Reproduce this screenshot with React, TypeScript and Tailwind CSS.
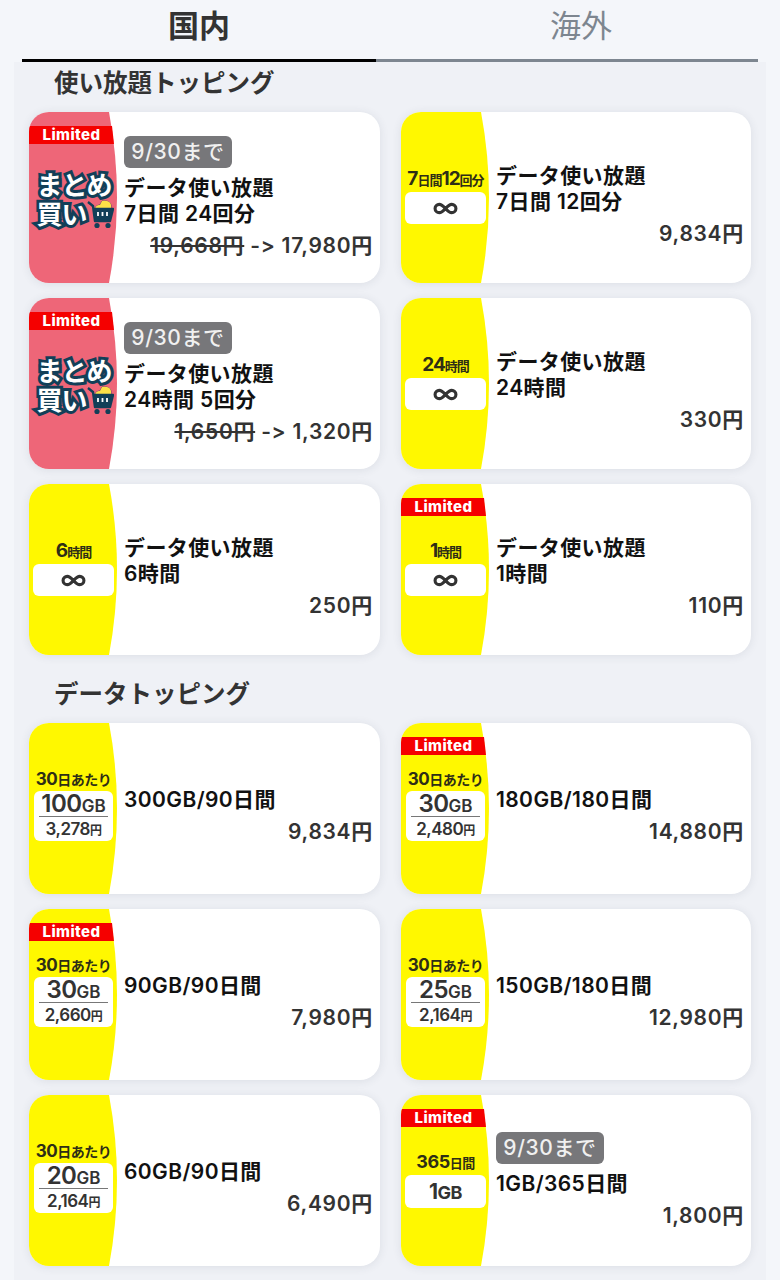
import { Infinity as InfinityIcon } from "lucide-react";

type Band =
    | { kind: "matome" }
    | { kind: "unlimited"; label: [string, string, string?, string?] }
    | { kind: "gb"; gb: string; price: string }
    | { kind: "year" };

type Topping = {
    band: Band;
    limited?: boolean;
    deadline?: boolean;
    title: string[];
    oldPrice?: string;
    price: string;
};

const unlimitedToppings: Topping[] = [
    { band: { kind: "matome" }, limited: true, deadline: true, title: ["データ使い放題", "7日間 24回分"], oldPrice: "19,668円", price: "17,980円" },
    { band: { kind: "unlimited", label: ["7", "日間", "12", "回分"] }, title: ["データ使い放題", "7日間 12回分"], price: "9,834円" },
    { band: { kind: "matome" }, limited: true, deadline: true, title: ["データ使い放題", "24時間 5回分"], oldPrice: "1,650円", price: "1,320円" },
    { band: { kind: "unlimited", label: ["24", "時間"] }, title: ["データ使い放題", "24時間"], price: "330円" },
    { band: { kind: "unlimited", label: ["6", "時間"] }, title: ["データ使い放題", "6時間"], price: "250円" },
    { band: { kind: "unlimited", label: ["1", "時間"] }, limited: true, title: ["データ使い放題", "1時間"], price: "110円" },
];

const dataToppings: Topping[] = [
    { band: { kind: "gb", gb: "100", price: "3,278" }, title: ["300GB/90日間"], price: "9,834円" },
    { band: { kind: "gb", gb: "30", price: "2,480" }, limited: true, title: ["180GB/180日間"], price: "14,880円" },
    { band: { kind: "gb", gb: "30", price: "2,660" }, limited: true, title: ["90GB/90日間"], price: "7,980円" },
    { band: { kind: "gb", gb: "25", price: "2,164" }, title: ["150GB/180日間"], price: "12,980円" },
    { band: { kind: "gb", gb: "20", price: "2,164" }, title: ["60GB/90日間"], price: "6,490円" },
    { band: { kind: "year" }, limited: true, deadline: true, title: ["1GB/365日間"], price: "1,800円" },
];

const BandShape = ({ color }: { color: string }) => (
    <svg className="absolute left-0 top-0" width="90" height="171" viewBox="0 0 90 171">
        <path d="M0 0H80Q96 85.5 80 171H0Z" fill={color} />
    </svg>
);

const CartIcon = () => (
    <svg width="27" height="30" viewBox="0 0 27 30" className="absolute left-[50px] top-[-1px]">
        <path d="M8 11q0-5 5-5l2-4q8-1 9 4v5z" fill="#fde047" stroke="#123f58" strokeWidth="0.6" />
        <path d="M1 3l5 4 2 15h15l3-12H7" fill="#123f58" stroke="#123f58" strokeWidth="2.4" strokeLinejoin="round" />
        <path d="M11 13v4M15.500 13v4M20 13v4" stroke="#ffffff" strokeWidth="1.800" />
        <circle cx="10" cy="26.500" r="2.600" fill="#123f58" />
        <circle cx="21" cy="26.500" r="2.600" fill="#123f58" />
    </svg>
);

const BandContent = ({ band }: { band: Band }) => {
    if (band.kind === "matome") {
        return (
            <div className="relative mt-[4px] flex w-[86px] flex-col pl-[6px] text-[26px] font-bold leading-[29px] tracking-[-1px] text-white [-webkit-text-stroke:6px_#123f58] [paint-order:stroke_fill]">
                <span>まとめ</span>
                <span className="relative">
                    買い
                    <CartIcon />
                </span>
            </div>
        );
    }

    if (band.kind === "unlimited") {
        const [a, b, c, d] = band.label;
        return (
            <div className="-mt-[5px] flex w-[81px] flex-col items-center">
                <div className="flex h-[26px] items-baseline font-bold leading-[26px] tracking-[-1px] text-[#2e2e16]">
                    <span className="text-[19px]">{a}</span>
                    <span className="text-[13px]">{b}</span>
                    {c && <span className="text-[19px]">{c}</span>}
                    {d && <span className="text-[13px]">{d}</span>}
                </div>
                <div className="flex h-[32px] w-full items-center justify-center rounded-md bg-white">
                    <InfinityIcon size={25} strokeWidth={3} color="#333333" />
                </div>
            </div>
        );
    }

    if (band.kind === "year") {
        return (
            <div className="-mt-[5px] flex w-[81px] flex-col items-center">
                <div className="flex h-[26px] items-baseline font-bold leading-[26px] tracking-[-0.5px] text-[#2e2e16]">
                    <span className="text-[18px]">365</span>
                    <span className="text-[13px]">日間</span>
                </div>
                <div className="flex h-[33px] w-full items-baseline justify-center rounded-md bg-white pt-[1px] font-bold tracking-[-0.5px] text-[#333333]">
                    <span className="text-[21px]">1</span>
                    <span className="text-[18px]">GB</span>
                </div>
            </div>
        );
    }

    return (
        <div className="-mt-[10px] flex w-[79px] flex-col items-center">
            <div className="flex h-[24px] items-baseline font-bold leading-[24px] tracking-[-0.5px] text-[#2e2e16]">
                <span className="text-[17px]">30</span>
                <span className="text-[14px]">日あたり</span>
            </div>
            <div className="flex h-[50px] w-full flex-col items-center rounded-md bg-white px-[5px] text-[#333333]">
                <div className="flex h-[26px] w-full items-baseline justify-center border-b border-[#777777] font-semibold">
                    <span className="text-[24px] leading-[26px] tracking-[-0.5px]">{band.gb}</span>
                    <span className="text-[17px] leading-[26px]">GB</span>
                </div>
                <div className="flex h-[24px] items-baseline font-semibold tracking-[-0.5px]">
                    <span className="text-[17px] leading-[24px]">{band.price}</span>
                    <span className="text-[12px] leading-[24px]">円</span>
                </div>
            </div>
        </div>
    );
};

const ToppingCard = ({ item }: { item: Topping }) => {
    const isMatome = item.band.kind === "matome";

    return (
        <div className="relative flex h-[171px] overflow-hidden rounded-[20px] bg-white shadow-[0_1px_10px_rgba(50,60,80,0.1)]">
            <BandShape color={isMatome ? "#ee6678" : "#fff800"} />
            <div className="relative flex w-[88px] shrink-0 items-center justify-center pl-[1px]">
                <BandContent band={item.band} />
            </div>
            {item.limited && (
                <div className="absolute left-0 top-[14px] flex h-[18px] w-[85px] items-center justify-center bg-[#f50000] text-[15px] font-extrabold tracking-[0.4px] text-white [clip-path:polygon(0_0,83px_0,85px_100%,0_100%)]">
                    Limited
                </div>
            )}
            <div className={`flex flex-1 flex-col justify-center pl-[7px] pr-[7px] ${item.deadline ? "" : "pt-[14px]"}`}>
                {item.deadline && (
                    <span className="mb-[7px] flex h-[32px] w-[108px] items-center justify-center rounded-md bg-[#77777a] text-[21px] font-medium tracking-[0.6px] text-[#f0f0f0]">
                        9/30まで
                    </span>
                )}
                {item.title.map((line) => (
                    <div key={line} className="text-[21px] font-semibold leading-[26px] tracking-[0.4px] text-[#111111]">
                        {line}
                    </div>
                ))}
                <div className="mt-[6px] text-right text-[21px] font-semibold leading-[26px] tracking-[0.7px] text-[#333333]">
                    {item.oldPrice && <span className="line-through decoration-2">{item.oldPrice}</span>}
                    {item.oldPrice && " -> "}
                    {item.price}
                </div>
            </div>
        </div>
    );
};

const Section = ({ title, items, className }: { title: string; items: Topping[]; className: string }) => (
    <section className={className}>
        <h2 className="mt-[1px] pl-[40px] text-[24.5px] font-semibold leading-[30px] text-[#333333]">{title}</h2>
        <div className="mt-[14px] grid grid-cols-[351px_350px] gap-x-[21px] gap-y-[15px] pl-[15px]">
            {items.map((item, i) => (
                <ToppingCard key={i} item={item} />
            ))}
        </div>
    </section>
);

export default function App() {
    return (
        <div className="h-[1280px] w-[780px] overflow-hidden bg-[#f4f6fa] font-['Inter','Noto_Sans_CJK_JP',sans-serif]">
            <div className="ml-[22px] flex h-[62px] w-[736px]">
                <div className="flex w-[354px] items-center justify-center border-b-[3px] border-black pb-[6px] text-[31px] font-semibold text-[#333333]">
                    国内
                </div>
                <div className="flex flex-1 items-center justify-center border-b-[3px] border-[#7d8690] pb-[6px] pl-[28px] text-[31px] text-[#7d8690]">
                    海外
                </div>
            </div>
            <div className="mx-[14px] h-[1218px] bg-[#eff1f6] pt-[5px]">
                <Section title="使い放題トッピング" items={unlimitedToppings} className="" />
                <Section title="データトッピング" items={dataToppings} className="mt-[24px]" />
            </div>
        </div>
    );
}
